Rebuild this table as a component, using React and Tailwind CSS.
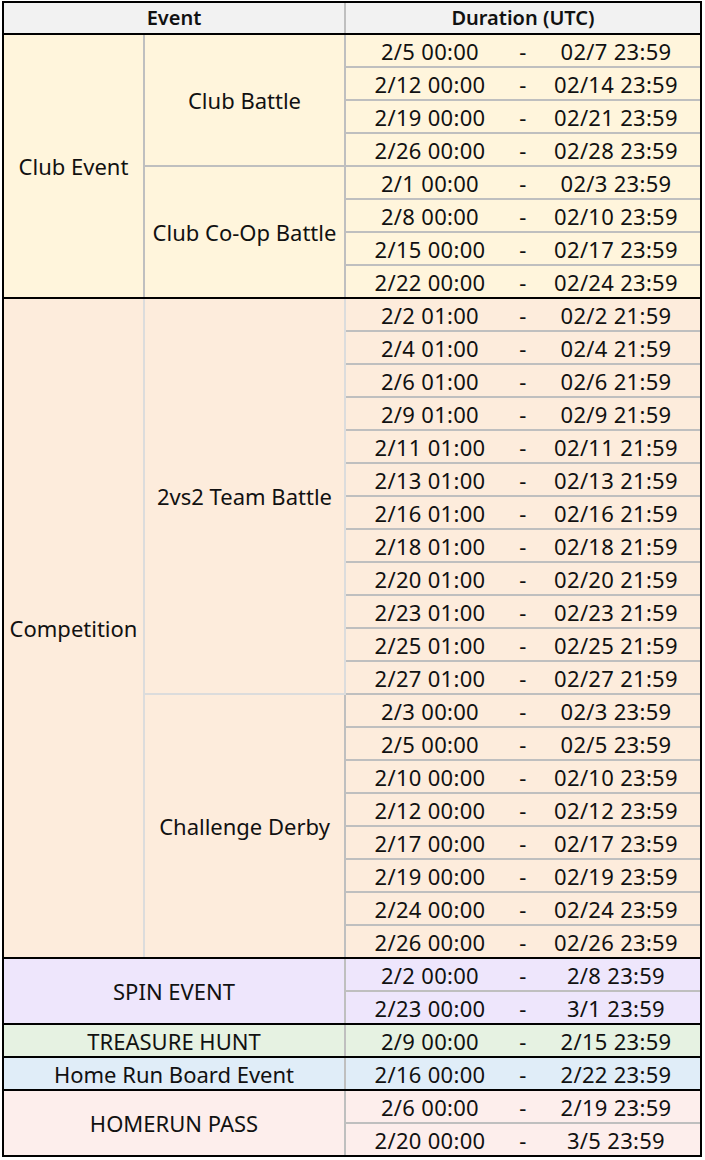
const GROUPS = [
  {
    name: 'Club Event',
    bg: 'bg-[#fff5dc]',
    line: 'border-[#bfbfbf]',
    events: [
      {
        name: 'Club Battle',
        dates: [
          ['2/5 00:00', '02/7 23:59'],
          ['2/12 00:00', '02/14 23:59'],
          ['2/19 00:00', '02/21 23:59'],
          ['2/26 00:00', '02/28 23:59'],
        ],
      },
      {
        name: 'Club Co-Op Battle',
        dates: [
          ['2/1 00:00', '02/3 23:59'],
          ['2/8 00:00', '02/10 23:59'],
          ['2/15 00:00', '02/17 23:59'],
          ['2/22 00:00', '02/24 23:59'],
        ],
      },
    ],
  },
  {
    name: 'Competition',
    bg: 'bg-[#fdecdc]',
    line: 'border-[#dcdcdc]',
    events: [
      {
        name: '2vs2 Team Battle',
        dates: [
          ['2/2 01:00', '02/2 21:59'],
          ['2/4 01:00', '02/4 21:59'],
          ['2/6 01:00', '02/6 21:59'],
          ['2/9 01:00', '02/9 21:59'],
          ['2/11 01:00', '02/11 21:59'],
          ['2/13 01:00', '02/13 21:59'],
          ['2/16 01:00', '02/16 21:59'],
          ['2/18 01:00', '02/18 21:59'],
          ['2/20 01:00', '02/20 21:59'],
          ['2/23 01:00', '02/23 21:59'],
          ['2/25 01:00', '02/25 21:59'],
          ['2/27 01:00', '02/27 21:59'],
        ],
      },
      {
        name: 'Challenge Derby',
        dates: [
          ['2/3 00:00', '02/3 23:59'],
          ['2/5 00:00', '02/5 23:59'],
          ['2/10 00:00', '02/10 23:59'],
          ['2/12 00:00', '02/12 23:59'],
          ['2/17 00:00', '02/17 23:59'],
          ['2/19 00:00', '02/19 23:59'],
          ['2/24 00:00', '02/24 23:59'],
          ['2/26 00:00', '02/26 23:59'],
        ],
      },
    ],
  },
  {
    name: 'SPIN EVENT',
    bg: 'bg-[#eee6fc]',
    dates: [
      ['2/2 00:00', '2/8 23:59'],
      ['2/23 00:00', '3/1 23:59'],
    ],
  },
  {
    name: 'TREASURE HUNT',
    bg: 'bg-[#e6f2e2]',
    dates: [['2/9 00:00', '2/15 23:59']],
  },
  {
    name: 'Home Run Board Event',
    bg: 'bg-[#e0edf8]',
    dates: [['2/16 00:00', '2/22 23:59']],
  },
  {
    name: 'HOMERUN PASS',
    bg: 'bg-[#fdeeec]',
    dates: [
      ['2/6 00:00', '2/19 23:59'],
      ['2/20 00:00', '3/5 23:59'],
    ],
  },
];

function DateRows({ dates }) {
  return (
    <div className="flex w-[354px] flex-col">
      {dates.map(([start, end]) => (
        <div
          key={start}
          className="grid h-[33px] grid-cols-[168px_18px_1fr] items-center border-b-2 border-[#bfbfbf] text-center tracking-[0.3px] last:h-[31px] last:border-b-0"
        >
          <span>{start}</span>
          <span>-</span>
          <span>{end}</span>
        </div>
      ))}
    </div>
  );
}

function Group({ group, last }) {
  return (
    <div className={`flex ${group.bg} ${last ? '' : 'border-b-2 border-black'}`}>
      {group.events ? (
        <>
          <div className={`flex w-[141px] items-center justify-center border-r-2 ${group.line}`}>
            {group.name}
          </div>
          <div className="flex flex-col">
            {group.events.map((ev, i) => {
              const notLast = i < group.events.length - 1;
              return (
                <div key={ev.name} className="flex">
                  <div
                    className={`flex w-[201px] items-center justify-center border-r-2 border-[#bfbfbf] ${
                      notLast ? `border-b-2 ${group.line}` : ''
                    }`}
                  >
                    {ev.name}
                  </div>
                  <div className={notLast ? 'border-b-2 border-[#bfbfbf]' : ''}>
                    <DateRows dates={ev.dates} />
                  </div>
                </div>
              );
            })}
          </div>
        </>
      ) : (
        <>
          <div className="flex w-[342px] items-center justify-center border-r-2 border-[#bfbfbf]">
            {group.name}
          </div>
          <DateRows dates={group.dates} />
        </>
      )}
    </div>
  );
}

export default function App() {
  return (
    <div className="bg-white pt-px pl-[2px] font-['Noto_Sans',sans-serif] text-[22px] leading-none text-[#111]">
      <div className="w-[700px] border-2 border-black">
        <div className="flex h-[32px] border-b-2 border-black bg-[#f2f2f2] text-[20px] font-semibold">
          <div className="flex w-[342px] items-center justify-center border-r-2 border-[#bfbfbf]">Event</div>
          <div className="flex flex-1 items-center justify-center">Duration (UTC)</div>
        </div>
        {GROUPS.map((g, i) => (
          <Group key={g.name} group={g} last={i === GROUPS.length - 1} />
        ))}
      </div>
    </div>
  );
}
